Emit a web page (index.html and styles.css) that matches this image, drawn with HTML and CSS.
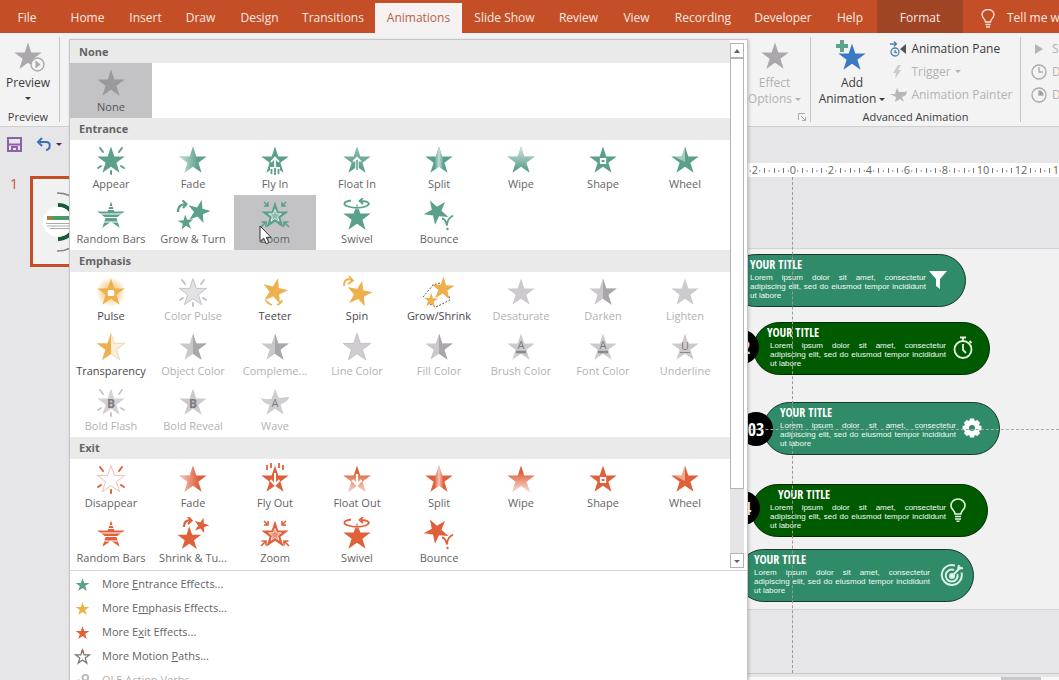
FILE: index.html
```html
<!DOCTYPE html>
<html lang="en">
<head>
<meta charset="utf-8">
<title>Presentation - Animations</title>
<link rel="stylesheet" href="styles.css">
</head>
<body>
<svg class="sprite" width="0" height="0" aria-hidden="true">
  <defs>
    <linearGradient id="g-left"><stop offset=".15" stop-color="#fff" stop-opacity=".55"/><stop offset=".7" stop-color="#fff" stop-opacity="0"/></linearGradient>
    <linearGradient id="g-mid"><stop offset=".34" stop-color="#fff" stop-opacity="0"/><stop offset=".5" stop-color="#fff" stop-opacity=".65"/><stop offset=".66" stop-color="#fff" stop-opacity="0"/></linearGradient>
    <linearGradient id="g-top" x2="0" y2="1"><stop offset=".1" stop-color="#fff" stop-opacity=".65"/><stop offset=".9" stop-color="#fff" stop-opacity="0"/></linearGradient>
    <linearGradient id="g-bottom" x2="0" y2="1"><stop offset=".25" stop-color="#fff" stop-opacity="0"/><stop offset=".9" stop-color="#fff" stop-opacity=".7"/></linearGradient>
    <radialGradient id="g-glow"><stop offset=".2" stop-color="#edb04c" stop-opacity=".8"/><stop offset="1" stop-color="#edb04c" stop-opacity="0"/></radialGradient>
    <path id="star" d="M17 3.500l3.300 9.900h10.400l-8.300 6.300 3.200 10-8.600-6-8.600 6 3.200-10-8.300-6.300h10.400z"/>
    <path id="half" d="M17 3.500l3.300 9.900h10.400l-8.300 6.300 3.200 10-8.600-6z"/>
    <g id="rays" stroke="currentColor" stroke-width="2" stroke-linecap="round"><path d="M6 5l3 4M28 5l-3 4M4 25l3-2M30 25l-3-2M17 28v3"/></g>
    <g id="zoomarrows" fill="none" stroke="currentColor" stroke-width="1.6"><path d="M6 4l4 4M10 4v4H6M28 4l-4 4M24 4v4h4M3 29l5-5M3.500 24H8v4.500M31 29l-5-5M30.500 24H26v4.500"/></g>
    <symbol id="i-star" viewBox="0 0 34 33"><use href="#star" fill="currentColor"/></symbol>
    <symbol id="i-appear" viewBox="0 0 34 33"><use href="#star" fill="currentColor"/><use href="#rays"/></symbol>
    <symbol id="i-disappear" viewBox="0 0 34 33"><use href="#star" fill="#fff" stroke="#eec0b4"/><use href="#rays"/></symbol>
    <symbol id="i-fade" viewBox="0 0 34 33"><use href="#star" fill="currentColor"/><use href="#star" fill="url(#g-left)"/></symbol>
    <symbol id="i-split" viewBox="0 0 34 33"><use href="#star" fill="currentColor"/><use href="#star" fill="url(#g-mid)"/></symbol>
    <symbol id="i-wipe" viewBox="0 0 34 33"><use href="#star" fill="currentColor"/><use href="#star" fill="url(#g-top)"/></symbol>
    <symbol id="i-wipeout" viewBox="0 0 34 33"><use href="#star" fill="currentColor"/><use href="#star" fill="url(#g-bottom)"/></symbol>
    <symbol id="i-flyin" viewBox="0 0 34 33"><use href="#star" fill="currentColor"/><path d="M13 19l4-4.500 4 4.500M17 15v9" fill="none" stroke="#fff" stroke-width="1.800"/><path d="M17 24v8" stroke="#fff" stroke-width="10"/><path d="M13.500 26v5M17 25v7M20.500 26v5" stroke="currentColor" stroke-width="1.800"/></symbol>
    <symbol id="i-flyout" viewBox="0 0 34 33"><use href="#star" fill="currentColor"/><path d="M9 3v5M13 1v5M21 1v5M25 3v5" stroke="currentColor" stroke-width="1.800"/><path d="M12.500 18l4.500 5 4.500-5M17 11v11" fill="none" stroke="#fff" stroke-width="2"/></symbol>
    <symbol id="i-floatin" viewBox="0 0 34 33"><use href="#star" fill="currentColor"/><use href="#star" fill="url(#g-top)" opacity=".4"/><path d="M17 13.500l-5 5h3.300V26h3.400v-7.500H22z" fill="#fff"/><path d="M17 17v10" stroke="currentColor" stroke-width="1.500"/></symbol>
    <symbol id="i-floatout" viewBox="0 0 34 33"><use href="#star" fill="currentColor"/><use href="#star" fill="url(#g-bottom)" opacity=".9"/><path d="M12.500 18l4.500 5 4.500-5M17 12v10" fill="none" stroke="#fff" stroke-width="2.200"/></symbol>
    <symbol id="i-shape" viewBox="0 0 34 33"><use href="#star" fill="currentColor"/><path d="M14.800 16h4.500v4h-4.500z" fill="none" stroke="#fff" stroke-width="1.800"/></symbol>
    <symbol id="i-wheel" viewBox="0 0 34 33"><use href="#star" fill="currentColor"/><path d="M17 3.500V19L6 13.400h7.700z" fill="#fff" opacity=".45"/></symbol>
    <symbol id="i-bars" viewBox="0 0 34 33"><use href="#star" fill="currentColor"/><path d="M10 8.500h14M10 11.500h14M3 16h28M7 19.500h20M7 24h20" stroke="#fff" stroke-width="1.100"/></symbol>
    <symbol id="i-grow" viewBox="0 0 34 33"><g fill="currentColor"><use href="#star" transform="translate(23 13) rotate(14) scale(.84) translate(-17 -17)"/><use href="#star" transform="translate(9.700 24) rotate(-5) scale(.56) translate(-17 -17)"/></g><path d="M2 14c0-6 3-8 8-8M6.500 2.500L10.500 6l-3.500 4" fill="none" stroke="currentColor" stroke-width="2.200"/></symbol>
    <symbol id="i-shrink" viewBox="0 0 34 33"><g fill="currentColor"><use href="#star" transform="translate(13.300 21) scale(.87) translate(-17 -17)"/><use href="#star" transform="translate(25.500 8) rotate(16) scale(.55) translate(-17 -17)"/></g><path d="M8 10c0-5 2-7 7-7M12 0l3.500 3.500L12 7" fill="none" stroke="currentColor" stroke-width="2.200"/></symbol>
    <symbol id="i-zoom" viewBox="0 0 34 33"><use href="#star" fill="currentColor"/><path d="M17 11.500l1.700 4.300h4.600l-3.700 3 1.400 4.400-4-2.700-4 2.700 1.400-4.400-3.700-3h4.600z" fill="#fff" fill-opacity=".3" stroke="#fff" stroke-opacity=".75"/><use href="#zoomarrows"/></symbol>
    <symbol id="i-swivel" viewBox="0 0 34 33"><use href="#star" fill="currentColor" transform="translate(0 2)"/><path d="M11 2.500C2 4 3 7 9 8.500M25 8.500c6-2 5-5-4-5.500M23 0l-3.500 3L23 6" fill="none" stroke="currentColor" stroke-width="1.800"/><path d="M8 8.500c5 1.500 13 1.500 18 0" fill="none" stroke="#fff" stroke-width="2.600"/><path d="M8 8.500c5 1.500 13 1.500 18 0" fill="none" stroke="currentColor" stroke-width="1.600"/></symbol>
    <symbol id="i-bounce" viewBox="0 0 34 33"><use href="#star" fill="currentColor" transform="translate(14 13) rotate(-30) scale(.9) translate(-17 -17)"/><path d="M20 20.500c3 0 4 3 5 7 0-6 3-8 6-10" fill="none" stroke="currentColor" stroke-width="1.800"/><circle cx="25.500" cy="31" r="1.200" fill="currentColor"/></symbol>
    <symbol id="i-pulse" viewBox="0 0 34 33"><circle cx="17" cy="17" r="15" fill="url(#g-glow)"/><use href="#star" fill="currentColor"/><rect x="13.700" y="15" width="6.500" height="6" rx="1.500" fill="#fff"/></symbol>
    <symbol id="i-colorpulse" viewBox="0 0 34 33"><use href="#star" fill="#e3e1e4" stroke="#c6c4c8"/><use href="#rays" color="#c3c1c4"/></symbol>
    <symbol id="i-teeter" viewBox="0 0 34 33"><use href="#star" fill="currentColor" transform="translate(17 15.500) rotate(14) scale(.93) translate(-17 -17)"/><path d="M8 25c1 3 3 4 6 5M24 25c-1 3-2 4-5 5" fill="none" stroke="currentColor" stroke-width="1.800"/></symbol>
    <symbol id="i-spin" viewBox="0 0 34 33"><use href="#star" fill="currentColor" transform="translate(19.500 18) rotate(12) scale(.93) translate(-17 -17)"/><path d="M4 11c0-6 3-8 8-6M9 1l4 4.500-5 3.500" fill="none" stroke="currentColor" stroke-width="1.800"/></symbol>
    <symbol id="i-growshrink" viewBox="0 0 34 33"><path d="M1 22L11 10l7-2M14 32l14-7-1-4M8 29l6 3" fill="none" stroke="#555" stroke-dasharray="2 1.500"/><use href="#star" fill="currentColor" transform="translate(21 13) rotate(4) scale(.84) translate(-17 -17)"/><use href="#star" fill="currentColor" transform="translate(9 25) rotate(4) scale(.52) translate(-17 -17)"/></symbol>
    <symbol id="i-transp" viewBox="0 0 34 33"><use href="#star" fill="#fbeedb" stroke="#edcf9f" stroke-width=".8"/><path d="M17 3.500v20.200l-8.600 6 3.200-10-8.300-6.300h10.400z" fill="currentColor"/></symbol>
    <symbol id="i-half" viewBox="0 0 34 33"><use href="#star" fill="#cac8cb"/><use href="#half" fill="#aaa7ab"/></symbol>
    <symbol id="i-plain" viewBox="0 0 34 33"><use href="#star" fill="#cccacd"/></symbol>
    <symbol id="i-line" viewBox="0 0 34 33"><use href="#star" fill="#cfcdd0" stroke="#c2c0c4"/></symbol>
    <symbol id="i-flash" viewBox="0 0 34 33"><use href="#star" fill="#d3d1d4"/><use href="#rays" color="#c9c7ca"/></symbol>
    <symbol id="i-wave" viewBox="0 0 34 33"><path d="M17 3.500l3.500 9c3 1 6-1 10.500-.5-1 4-5 6-8.500 7.500l3.200 10.200-8.700-6-8.600 6 3.200-10c-4-1-7-3-9-7 4 2 7 1 11 1z" fill="#cfcdd0"/></symbol>
    <symbol id="i-ticks" viewBox="0 0 38 14"><path d="M0.500 5v5M9.500 5v5M28.500 5v5" stroke="#777"/><path d="M4.750 7v2M14.250 7v2M23.750 7v2M33.250 7v2" stroke="#999"/></symbol>
  </defs>
</svg>

<nav class="tabs">
  <button class="tab file">File</button><button class="tab">Home</button><button class="tab">Insert</button><button class="tab">Draw</button><button class="tab">Design</button><button class="tab">Transitions</button><button class="tab active">Animations</button><button class="tab">Slide Show</button><button class="tab">Review</button><button class="tab">View</button><button class="tab">Recording</button><button class="tab">Developer</button><button class="tab">Help</button><button class="tab format">Format</button>
  <button class="tab tell"><svg width="14" height="19" viewBox="0 0 14 19" fill="none" stroke="#fbe3da" stroke-width="1.300"><path d="M4.500 13c0-3-3.500-4-3.500-7.500a6 5 0 0 1 12 0c0 3.500-3.500 4.500-3.500 7.500zM4.500 15.500h5M5 18h4"/></svg>Tell me what you want to do</button>
</nav>

<header class="ribbon">
  <section class="group preview">
    <button class="big"><svg width="34" height="33" class="gray"><use href="#i-star"/><circle cx="26.500" cy="25.500" r="6.500" fill="#f3f3f4" stroke="#aaa" stroke-width="1.400"/><path d="M24.500 21.500v8l5-4z" fill="#aaa"/></svg><span>Preview</span><i class="caret"></i></button>
    <h2>Preview</h2>
  </section>
  <div class="gallery">
    <div class="scroller">
      <div class="sections">
        <section class="first"><h3>None</h3><div class="items none">
          <button class="item on"><svg><use href="#i-star"/></svg>None</button>
        </div></section>
        <section><h3>Entrance</h3><div class="items entrance">
          <button class="item"><svg><use href="#i-appear"/></svg>Appear</button>
          <button class="item"><svg><use href="#i-fade"/></svg>Fade</button>
          <button class="item"><svg><use href="#i-flyin"/></svg>Fly In</button>
          <button class="item"><svg><use href="#i-floatin"/></svg>Float In</button>
          <button class="item"><svg><use href="#i-split"/></svg>Split</button>
          <button class="item"><svg><use href="#i-wipe"/></svg>Wipe</button>
          <button class="item"><svg><use href="#i-shape"/></svg>Shape</button>
          <button class="item"><svg><use href="#i-wheel"/></svg>Wheel</button>
          <button class="item"><svg><use href="#i-bars"/></svg>Random Bars</button>
          <button class="item"><svg><use href="#i-grow"/></svg>Grow &amp; Turn</button>
          <button class="item on"><svg><use href="#i-zoom"/></svg>Zoom<svg class="cursor" viewBox="0 0 13 20"><path d="M1 1v15.500l3.700-3.300 2.500 5.600 2.600-1.200-2.500-5.300H12z" fill="#fff" stroke="#333"/></svg></button>
          <button class="item"><svg><use href="#i-swivel"/></svg>Swivel</button>
          <button class="item"><svg><use href="#i-bounce"/></svg>Bounce</button>
        </div></section>
        <section><h3>Emphasis</h3><div class="items emphasis">
          <button class="item"><svg><use href="#i-pulse"/></svg>Pulse</button>
          <button class="item" disabled><svg><use href="#i-colorpulse"/></svg>Color Pulse</button>
          <button class="item"><svg><use href="#i-teeter"/></svg>Teeter</button>
          <button class="item"><svg><use href="#i-spin"/></svg>Spin</button>
          <button class="item"><svg><use href="#i-growshrink"/></svg>Grow/Shrink</button>
          <button class="item" disabled><svg><use href="#i-plain"/></svg>Desaturate</button>
          <button class="item" disabled><svg><use href="#i-half"/></svg>Darken</button>
          <button class="item" disabled><svg><use href="#i-plain"/></svg>Lighten</button>
          <button class="item"><svg><use href="#i-transp"/></svg>Transparency</button>
          <button class="item" disabled><svg><use href="#i-half"/></svg>Object Color</button>
          <button class="item" disabled><svg><use href="#i-half"/></svg>Compleme...</button>
          <button class="item" disabled><svg><use href="#i-line"/></svg>Line Color</button>
          <button class="item" disabled><svg><use href="#i-half"/></svg>Fill Color</button>
          <button class="item" disabled><svg><use href="#i-plain"/><text x="17" y="19">A</text><path d="M12 22h10" stroke="#8a888b" stroke-width="2.500"/></svg>Brush Color</button>
          <button class="item" disabled><svg><use href="#i-plain"/><text x="17" y="19">A</text><path d="M12 22h10" stroke="#8a888b" stroke-width="2.500"/></svg>Font Color</button>
          <button class="item" disabled><svg><use href="#i-plain"/><text x="17" y="20">U</text><path d="M12 22.500h10" stroke="#8a888b"/></svg>Underline</button>
          <button class="item" disabled><svg><use href="#i-flash"/><text class="b" x="17" y="23">B</text></svg>Bold Flash</button>
          <button class="item" disabled><svg><use href="#i-plain"/><text class="b" x="17" y="23">B</text></svg>Bold Reveal</button>
          <button class="item" disabled><svg><use href="#i-wave"/><text x="17" y="22">A</text></svg>Wave</button>
        </div></section>
        <section><h3>Exit</h3><div class="items exit">
          <button class="item"><svg><use href="#i-disappear"/></svg>Disappear</button>
          <button class="item"><svg><use href="#i-fade"/></svg>Fade</button>
          <button class="item"><svg><use href="#i-flyout"/></svg>Fly Out</button>
          <button class="item"><svg><use href="#i-floatout"/></svg>Float Out</button>
          <button class="item"><svg><use href="#i-split"/></svg>Split</button>
          <button class="item"><svg><use href="#i-wipeout"/></svg>Wipe</button>
          <button class="item"><svg><use href="#i-shape"/></svg>Shape</button>
          <button class="item"><svg><use href="#i-wheel"/></svg>Wheel</button>
          <button class="item"><svg><use href="#i-bars"/></svg>Random Bars</button>
          <button class="item"><svg><use href="#i-shrink"/></svg>Shrink &amp; Tu...</button>
          <button class="item"><svg><use href="#i-zoom"/></svg>Zoom</button>
          <button class="item"><svg><use href="#i-swivel"/></svg>Swivel</button>
          <button class="item"><svg><use href="#i-bounce"/></svg>Bounce</button>
        </div></section>
      </div>
      <div class="scrollbar">
        <button aria-label="Scroll up"><i class="caret up"></i></button>
        <div class="thumb"></div><div class="track"></div>
        <button aria-label="Scroll down"><i class="caret"></i></button>
      </div>
    </div>
    <div class="more">
      <button class="row"><svg class="c-green"><use href="#i-star"/></svg><span>More <u>E</u>ntrance Effects...</span></button>
      <button class="row"><svg class="c-gold"><use href="#i-star"/></svg><span>More E<u>m</u>phasis Effects...</span></button>
      <button class="row"><svg class="c-red"><use href="#i-star"/></svg><span>More E<u>x</u>it Effects...</span></button>
      <button class="row"><svg viewBox="0 0 34 33"><use href="#star" fill="#fff" stroke="#777" stroke-width="2.500"/><circle cx="17" cy="6" r="2.500" fill="#d0603c"/></svg><span>More Motion <u>P</u>aths...</span></button>
      <button class="row" disabled><svg viewBox="0 0 18 18" fill="none" stroke="#bbb" stroke-width="2"><circle cx="12" cy="6" r="3"/><circle cx="5" cy="12" r="3"/></svg><span>OLE Action Verbs...</span></button>
    </div>
  </div>
  <section class="group effect">
    <button class="big" disabled><svg width="34" height="33" class="gray"><use href="#i-star"/></svg><span>Effect</span><span>Options <i class="caret"></i></span></button>
    <svg class="launcher" width="8" height="8" viewBox="0 0 8 8" fill="none" stroke="#aaa"><path d="M.5 7V.5H7M3 3l4 4M7.500 4v3.500H4"/></svg>
  </section>
  <section class="group advanced">
    <div class="cols">
      <button class="big"><svg width="34" height="33" class="blue"><use href="#i-star" y="1"/><path d="M7 1v12M1 7h12" stroke="#5fa28e" stroke-width="4"/></svg><span>Add</span><span>Animation <i class="caret"></i></span></button>
      <div class="list">
        <button><svg viewBox="0 0 17 16" fill="none" stroke="#4d7fb5" stroke-width="1.300"><circle cx="5" cy="11" r="4"/><path d="M5 9v2.500h2M0 3h6M4 .5L6.500 3 4 5.500"/><path d="M16 3v10l-6-5z" fill="#555" stroke="none"/></svg>Animation Pane</button>
        <button disabled><svg viewBox="0 0 17 16"><path d="M8 1L3 9h3l-1 6 6-9H8l3-5z" fill="#ccc"/></svg>Trigger <i class="caret"></i></button>
        <button disabled><svg viewBox="0 0 17 16"><path d="M7 1l2 4h6l2-1-1 4-4 2 2 5-4-3-5 3 1-5-6-3h5z" fill="#b8b8b8"/></svg>Animation Painter</button>
      </div>
    </div>
    <h2>Advanced Animation</h2>
  </section>
  <section class="group timing">
    <div class="list">
      <button disabled><svg viewBox="0 0 17 16"><path d="M4 3v10l8-5z" fill="#b5b5b5"/></svg>Start:</button>
      <button disabled><svg viewBox="0 0 17 16" fill="none" stroke="#aaa" stroke-width="1.300"><circle cx="8" cy="8" r="7"/><path d="M8 3v5h4"/></svg>Duration:</button>
      <button disabled><svg viewBox="0 0 17 16" fill="none" stroke="#aaa" stroke-width="1.300"><circle cx="8" cy="8" r="7"/><path d="M8 4v4h4a4 4 0 0 0-4-4z" fill="#999"/></svg>Delay:</button>
    </div>
  </section>
</header>

<main class="work">
  <aside class="side">
    <div class="quick">
      <button aria-label="Save"><svg width="15" height="15" viewBox="0 0 15 15" fill="none" stroke="#8b62a8" stroke-width="2"><path d="M1 1h13v13H1zM1 7.500h13M5 14v-4h5v4"/></svg></button>
      <button aria-label="Undo"><svg width="16" height="15" viewBox="0 0 16 15" fill="none" stroke="#3f6fb8" stroke-width="2"><path d="M6 1L2 5l4 4M2 5h8c5 0 5 7 0 8"/></svg><i class="caret"></i></button>
    </div>
    <div class="slides"><span class="num">1</span>
      <button class="slide-thumb" aria-label="Slide 1"><svg width="60" height="84" viewBox="0 0 60 84"><path d="M24 13a28 28 0 0 1 20 8M24 71a28 28 0 0 0 20-8" fill="none" stroke="#888" stroke-width="1.500"/><path d="M25 25a17 17 0 0 1 0 34" fill="none" stroke="#175c37" stroke-width="4"/><circle cx="25" cy="42" r="15" fill="#fff"/><path d="M15 38h22" stroke="#4c9a6a" stroke-width="4"/><path d="M14 38h5" stroke="#a1803a" stroke-width="4"/><path d="M13 43.500h24M14 46h23M17 48.500h20" stroke="#aaa"/></svg></button>
    </div>
  </aside>
  <div class="stage">
    <div class="ruler">
      <span><svg><use href="#i-ticks"/></svg><b>2</b></span><span><svg><use href="#i-ticks"/></svg><b>0</b></span><span><svg><use href="#i-ticks"/></svg><b>2</b></span><span><svg><use href="#i-ticks"/></svg><b>4</b></span><span><svg><use href="#i-ticks"/></svg><b>6</b></span><span><svg><use href="#i-ticks"/></svg><b>8</b></span><span><svg><use href="#i-ticks"/></svg><b>10</b></span><span><svg><use href="#i-ticks"/></svg><b>12</b></span><span><svg><use href="#i-ticks"/></svg><b>14</b></span>
    </div>
    <div class="canvas">
      <div class="slide">
        <article class="pill p1"><h4>YOUR TITLE</h4><p><span>Lorem ipsum dolor sit amet, consectetur</span><span>adipiscing elit, sed do eiusmod tempor incididunt</span>ut labore</p>
          <svg viewBox="0 0 24 24"><path d="M3 3h18l-7 8v10l-4-3v-7z" fill="#fff"/></svg></article>
        <article class="pill dark p2"><h4>YOUR TITLE</h4><p><span>Lorem ipsum dolor sit amet, consectetur</span><span>adipiscing elit, sed do eiusmod tempor incididunt</span>ut labore</p>
          <svg viewBox="0 0 24 24" fill="none" stroke="#e4f2e0" stroke-width="1.800"><circle cx="12" cy="13.500" r="8.500"/><path d="M9 1.500h6M12 2v3M18.500 5l2 2M12 8v6l3 3"/></svg></article>
        <article class="pill p3"><h4>YOUR TITLE</h4><p><span>Lorem ipsum dolor sit amet, consectetur</span><span>adipiscing elit, sed do eiusmod tempor incididunt</span>ut labore</p>
          <svg viewBox="0 0 24 24" fill="none" stroke="#fff"><circle cx="12" cy="12" r="5.500" stroke-width="5"/><path d="M12 2.500v3M12 18.500v3M2.500 12h3M18.500 12h3M5.300 5.300l2 2M16.700 16.700l2 2M5.300 18.700l2-2M16.700 7.300l2-2" stroke-width="4.500"/></svg></article>
        <article class="pill dark p4"><h4>YOUR TITLE</h4><p><span>Lorem ipsum dolor sit amet, consectetur</span><span>adipiscing elit, sed do eiusmod tempor incididunt</span>ut labore</p>
          <svg viewBox="0 0 24 24" fill="none" stroke="#e4f2e0" stroke-width="1.600"><path d="M9 16c0-4-4-4-4-8.500a7 6.500 0 0 1 14 0C19 12 15 12 15 16zM9 18.500h6M9 21h6M10.500 23.200h3"/></svg></article>
        <article class="pill p5"><h4>YOUR TITLE</h4><p><span>Lorem ipsum dolor sit amet, consectetur</span><span>adipiscing elit, sed do eiusmod tempor incididunt</span>ut labore</p>
          <svg viewBox="0 0 24 24" fill="none" stroke="#d9f1e6" stroke-width="2"><path d="M15 2.500a10 10 0 1 0 6.500 7"/><path d="M14 7a6 6 0 1 0 3.500 4"/><circle cx="12" cy="13" r="2" fill="#fff"/><path d="M12 13l9-9M18 6l1-4M18 6l5-1"/></svg></article>
        <b class="badge b2">02</b><b class="badge b3">03</b><b class="badge b4">04</b>
      </div>
      <div class="guide-v"></div><div class="guide-h"></div>
    </div>
    <div class="status"><div class="hthumb"></div></div>
  </div>
</main>
</body>
</html>
```
FILE: styles.css
```css
* { box-sizing: border-box; }
body {
  margin: 0;
  height: 100vh;
  overflow: hidden;
  display: flex;
  flex-direction: column;
  background: #e6e6e8;
  color: #3b3b3b;
  font: 12px/16px "Open Sans", "Noto Sans", sans-serif;
}
button {
  margin: 0;
  padding: 0;
  border: 0;
  background: none;
  color: inherit;
  font: inherit;
  white-space: nowrap;
}
h2, h3, h4, p { margin: 0; font-size: inherit; font-weight: 400; }
.sprite { position: absolute; }
svg { display: block; flex: none; }
.caret {
  display: inline-block;
  width: 0;
  height: 0;
  border: 3px solid transparent;
  border-top-color: currentColor;
  border-bottom-width: 0;
  vertical-align: 2px;
}
.caret.up { border-width: 0 3px 4px; border-bottom-color: currentColor; }

/* Tabs */
.tabs {
  flex: none;
  display: grid;
  grid-template-columns: 57px 61px 55px 55px 63px 84px 87px 85px 63px 53px 80px 80px 54px 86px 1fr;
  height: 33px;
  background: #c44f27;
  color: #fbe9e2;
}
.tab { padding-top: 3px; overflow: hidden; }
.tab.file { padding-right: 3px; }
.tab.active { margin-top: 3px; padding-top: 0; background: #f5f2f1; color: #b5624a; }
.tab.format { background: #9f4425; }
.tab.tell { display: flex; align-items: center; gap: 12px; padding-left: 18px; }

/* Ribbon */
.ribbon {
  position: relative;
  z-index: 1;
  flex: none;
  display: flex;
  height: 94px;
  padding-top: 4px;
  background: #f3f3f4;
  border-bottom: 1px solid #cfcfd1;
}
.group {
  position: relative;
  flex: none;
  display: flex;
  flex-direction: column;
  align-items: center;
  justify-content: space-between;
  height: 85px;
  border-right: 1px solid #c6c6c8;
}
.group h2 { font-size: 11px; line-height: 10px; white-space: nowrap; }
.preview { width: 60px; padding-right: 3px; }
.effect { width: 72px; margin-left: 679px; }
.advanced { width: 210px; }
.timing { flex: 1; min-width: 0; overflow: hidden; padding-left: 10px; align-items: flex-start; border: 0; }
.big { display: flex; flex-direction: column; align-items: center; padding-top: 2px; }
.big svg { margin-bottom: 3px; overflow: visible; }
.preview .caret { margin-top: 6px; }
.big:disabled, .list button:disabled { color: #b3b1b4; }
.gray { color: #aaa8ab; }
.blue { color: #3a7ac2; }
.launcher { position: absolute; right: 4px; bottom: 1px; }
.cols { display: flex; gap: 5px; height: 71px; }
.list { display: flex; flex-direction: column; }
.list button { display: flex; align-items: center; gap: 4px; height: 23px; }
.list svg { width: 17px; height: 16px; }

/* Effect gallery */
.gallery {
  position: absolute;
  top: 6px;
  left: 69px;
  width: 679px;
  height: calc(100vh - 39px);
  overflow: hidden;
  background: #fff;
  border: 1px solid #c6c6c8;
  border-bottom: 0;
  box-shadow: 1px 1px 3px #0003;
  color: #656366;
  font-size: 11px;
}
.scroller { display: flex; border-bottom: 1px solid #d6d4d6; padding-bottom: 1px; }
.sections { flex: 1; }
.gallery h3 {
  height: 22px;
  padding: 0 9px;
  background: #ebeaeb;
  font-weight: 700;
  line-height: 22px;
}
.gallery .first h3 { height: 23px; line-height: 24px; }
.items { display: grid; grid-template-columns: repeat(8, 82px); }
.item {
  position: relative;
  display: flex;
  flex-direction: column;
  align-items: center;
  height: 55px;
  padding-top: 3px;
}
.item svg { width: 34px; height: 33px; }
.item text { fill: #7d7b7e; font-size: 11px; text-anchor: middle; }
.item text.b { font-weight: 700; font-size: 12px; }
.item.on { background: #c3c2c4; }
.none .item { color: #555; }
.none svg { color: #9a999b; }
.entrance svg, .c-green { color: #5b9f8d; }
.emphasis svg, .c-gold { color: #edb04c; }
.exit svg, .c-red { color: #e0603a; }
.emphasis .item { color: #4a484b; }
.emphasis .item:disabled { color: #b3b1b4; }
.item .cursor { position: absolute; top: 30px; left: 25px; width: 13px; height: 20px; }
.scrollbar { width: 14px; margin: 3px 3px 1px 0; display: flex; flex-direction: column; }
.scrollbar button { height: 15px; border: 1px solid #b5b3b6; background: #fff; line-height: 10px; }
.thumb { flex: 432; border: 1px solid #b5b3b6; background: #fff; }
.track { flex: 64; background: #e6e4e6; }
.more { padding-top: 1px; }
.row { display: flex; align-items: center; gap: 11px; height: 24px; padding-left: 4px; }
.row svg { width: 17px; height: 17px; }
.row:disabled { color: #b3b1b4; }

/* Work area */
.work { flex: 1; min-height: 0; display: flex; }
.side { flex: none; width: 69px; overflow: hidden; }
.quick { display: flex; gap: 14px; height: 49px; padding: 10px 0 0 7px; }
.quick button { display: flex; align-items: center; gap: 4px; height: 15px; }
.slides { display: flex; }
.num { flex: none; width: 30px; padding-left: 10px; color: #c8562f; font-size: 14px; }
.slide-thumb { flex: none; width: 160px; height: 91px; border: 3px solid #c44f27; background: #f1f1f2; }
.stage { flex: 1; min-width: 0; display: flex; flex-direction: column; padding-top: 36px; }
.ruler { flex: none; display: flex; height: 14px; padding-left: 667px; overflow: hidden; background: #fff; }
.ruler span { flex: none; display: grid; place-items: center; width: 38px; height: 14px; }
.ruler svg, .ruler b { grid-area: 1 / 1; }
.ruler svg { width: 38px; height: 14px; }
.ruler b { background: #fff; color: #666; font-size: 11px; font-weight: 400; line-height: 14px; }
.canvas { position: relative; flex: 1; min-height: 0; padding-top: 71px; overflow: hidden; }
.slide { position: relative; height: 362px; background: #f1f1f2; border: 1px solid #d2d2d4; border-width: 1px 0; }
.status { flex: none; height: 7px; border-top: 1px solid #c9c9cb; background: linear-gradient(#e6e6e8 3px, #f8f8f8 3px); }
.hthumb { width: 40px; height: 3px; margin: 3px 0 0 932px; background: #c8c8ca; }
.guide-v { position: absolute; top: 0; bottom: 0; left: 723px; border-left: 1px dashed #999; }
.guide-h { position: absolute; top: 252px; left: 0; right: 0; border-top: 1px dashed #aaa; }

/* Slide shapes */
.pill {
  position: absolute;
  width: 237px;
  height: 53px;
  padding: 3px 0 0 16px;
  border: 1px solid #17382b;
  border-radius: 27px;
  background: #2f8b68;
  color: #f2fbf7;
  font: 8px/9px "Liberation Sans", Arial, sans-serif;
}
.pill.dark { background: #005a00; border-color: #042b04; }
.pill h4, .badge { font-family: "Liberation Sans Narrow", "Open Sans Condensed", "Liberation Sans", sans-serif; font-weight: 700; }
.pill h4 { font-size: 12px; line-height: 14px; color: #fff; }
.pill p { width: 176px; padding-top: 1px; }
.pill span { display: block; text-align-last: justify; white-space: nowrap; }
.pill svg { position: absolute; top: 13px; right: 14px; width: 24px; height: 24px; }
.p1 { top: 5px; left: 660px; padding-left: 20px; }
.p2 { top: 73px; left: 684px; padding-left: 16px; }
.p3 { top: 153px; left: 694px; }
.p4 { top: 235px; left: 682px; padding-left: 18px; }
.p5 { top: 300px; left: 668px; }
.p2 h4 { margin-left: -3px; }
.p4 h4 { margin-left: 8px; }
.p3 svg, .p1 svg { right: 15px; }
.p4 svg { right: 17px; }
.p5 svg { right: 9px; }
.badge {
  position: absolute;
  width: 34px;
  height: 34px;
  border-radius: 50%;
  background: #000;
  color: #fff;
  font-size: 18px;
  line-height: 34px;
  text-align: center;
}
.b2 { top: 81px; left: 656px; }
.b3 { top: 163px; left: 670px; }
.b4 { top: 242px; left: 657px; }
```
